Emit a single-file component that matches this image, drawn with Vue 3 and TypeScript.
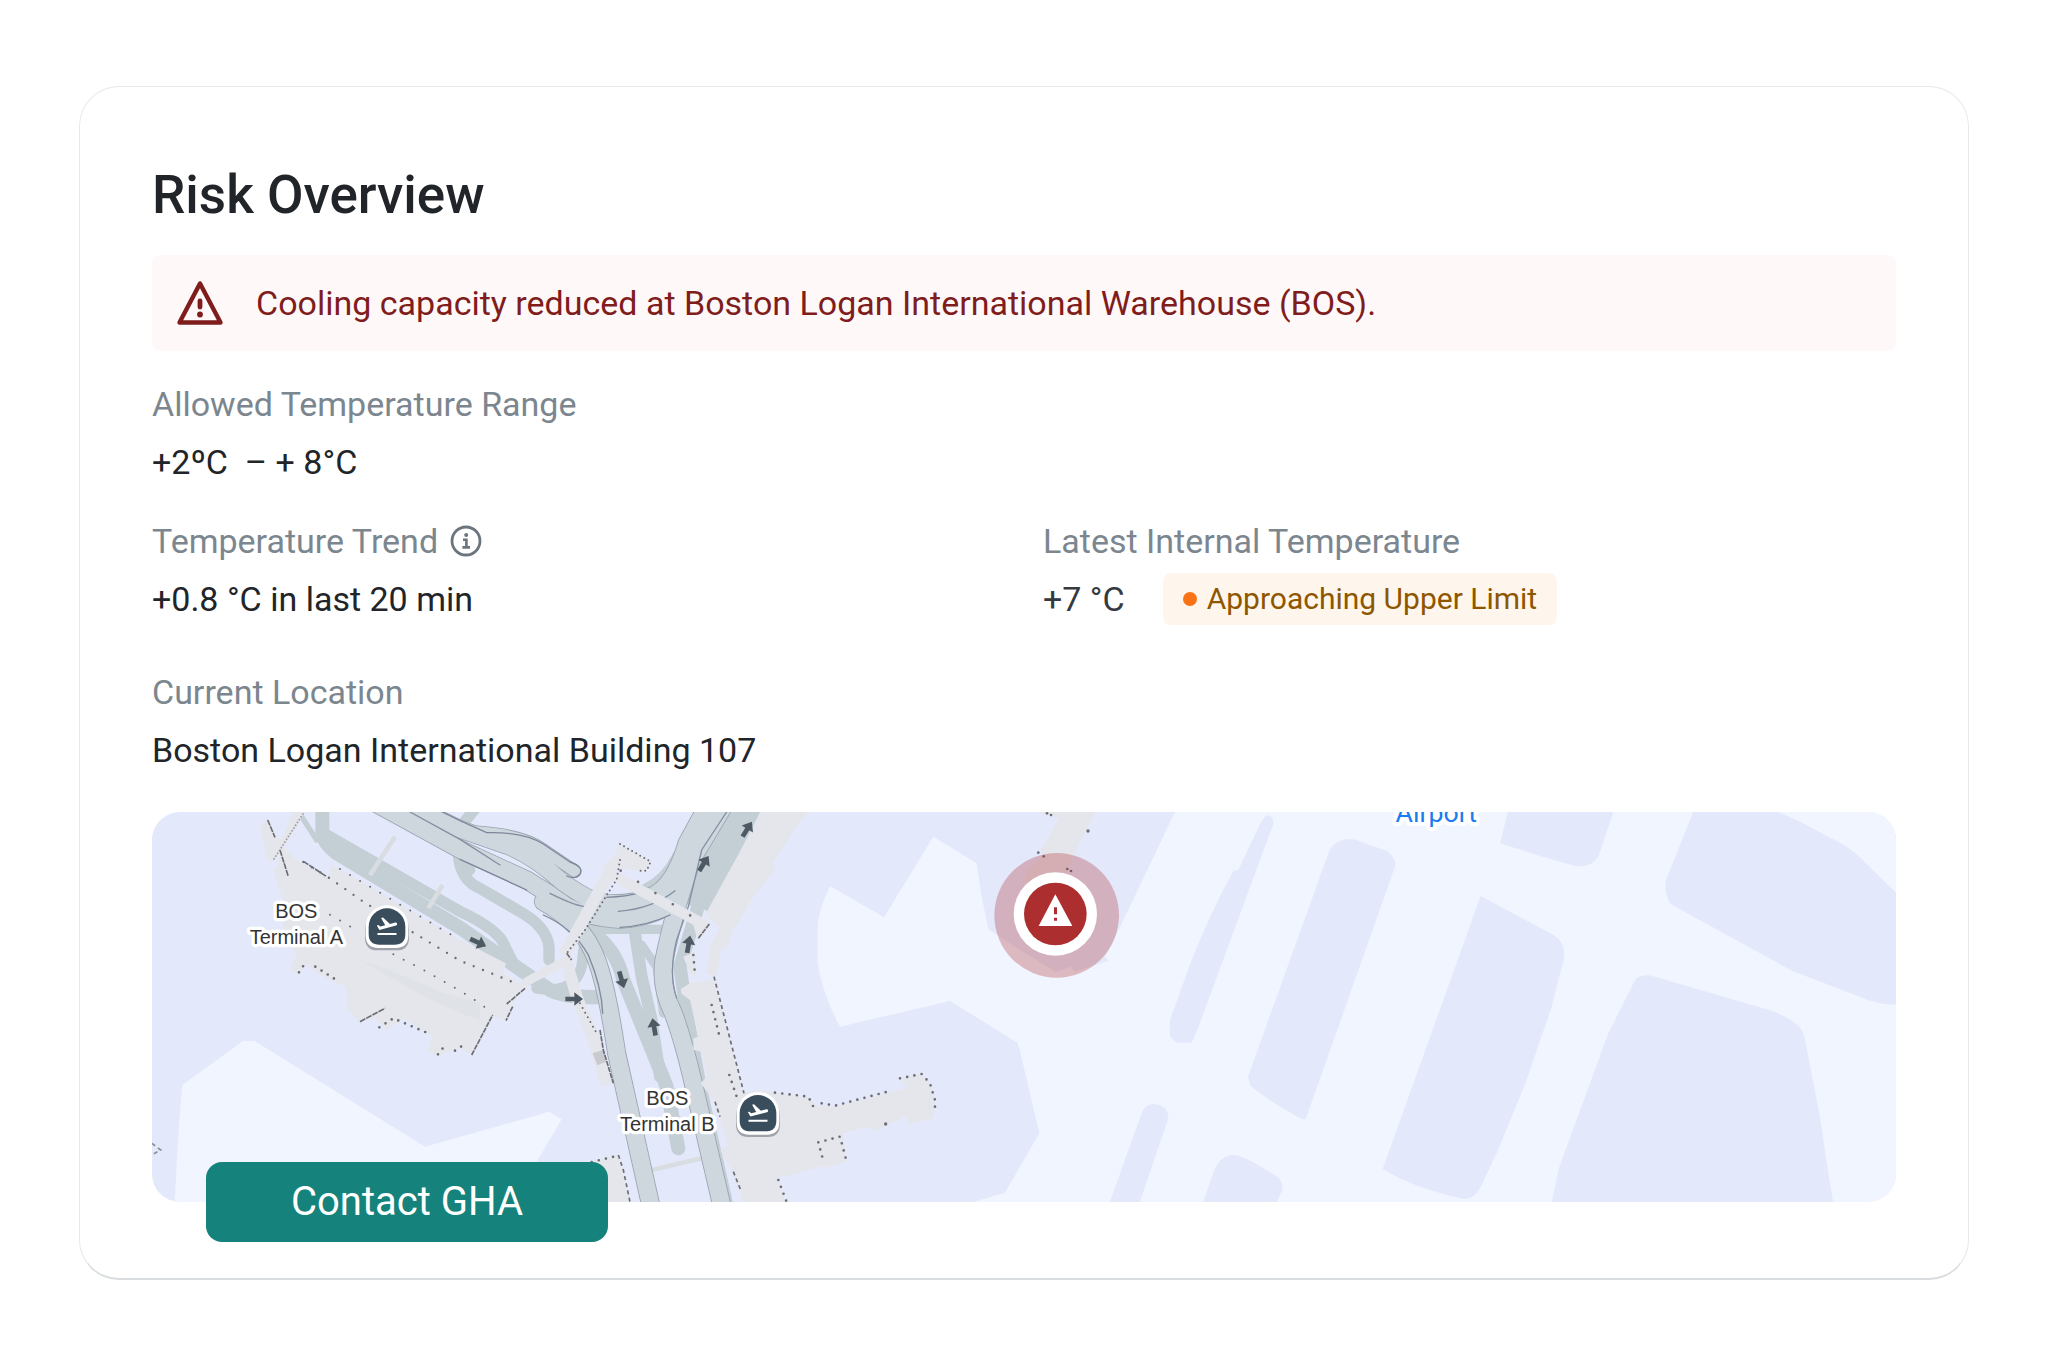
<script setup lang="ts">
interface Arrow {
  x: number
  y: number
  angle: number
}

interface TerminalPin {
  name: string
  textX: number
  textY: number
  pinX: number
  pinY: number
}

const arrows: Arrow[] = [
  { x: 55, y: 428, angle: 25 },
  { x: 343, y: 597, angle: 0 },
  { x: 485, y: 540, angle: 74 },
  { x: 582, y: 680, angle: -100 },
  { x: 686, y: 432, angle: -80 },
  { x: 732, y: 190, angle: -58 },
  { x: 862, y: 87, angle: -58 },
]

const terminals: TerminalPin[] = [
  { name: 'Terminal A', textX: 433, textY: 317, pinX: 705, pinY: 344 },
  { name: 'Terminal B', textX: 1546, textY: 878, pinX: 1818, pinY: 904 },
]

const elevatedRoads: { d: string; width: number }[] = [
  { d: 'M50 96Q190 105 250 150L345 214', width: 34 },
  { d: 'M-180 0L0 88L150 140Q230 175 300 240Q360 285 400 300Q480 325 570 290Q640 265 680 130L740 20', width: 50 },
  { d: 'M-270 0L0 148L200 240Q260 275 320 320Q380 350 480 358Q600 350 655 290', width: 52 },
  { d: 'M250 305Q370 370 410 480Q440 560 470 760L572 1215', width: 52 },
  { d: 'M790 20L700 170Q650 300 612 480Q600 560 640 640Q670 720 700 850L785 1215', width: 52 },
]
</script>

<template>
  <main class="page">
    <section class="card" aria-labelledby="risk-title">
      <h1 id="risk-title" class="title">Risk Overview</h1>

      <div class="alert" role="alert">
        <svg class="alert-icon" viewBox="0 0 48 46" aria-hidden="true">
          <path d="M24 3.5L3.5 42.5H44.5Z" fill="none" stroke="currentColor" stroke-width="4.4" stroke-linejoin="round" />
          <path d="M24 21V27" stroke="currentColor" stroke-width="4.8" stroke-linecap="round" />
          <circle cx="24" cy="34.5" r="2.9" fill="currentColor" />
        </svg>
        <span>Cooling capacity reduced at Boston Logan International Warehouse (BOS).</span>
      </div>

      <dl class="fields">
        <div class="field wide">
          <dt>Allowed Temperature Range</dt>
          <dd>+2ºC&nbsp; – + 8°C</dd>
        </div>
        <div class="field">
          <dt>
            Temperature Trend
            <svg class="info" viewBox="0 0 32 32" role="img" aria-label="More information">
              <circle cx="16" cy="16" r="14" fill="none" stroke="currentColor" stroke-width="2.8" />
              <circle cx="16.2" cy="10" r="2" fill="currentColor" />
              <path d="M13 14.8H16.4V22.2M12.4 22.4H20" fill="none" stroke="currentColor" stroke-width="2.6" />
            </svg>
          </dt>
          <dd>+0.8 °C in last 20 min</dd>
        </div>
        <div class="field">
          <dt>Latest Internal Temperature</dt>
          <dd class="reading">
            +7 °C
            <span class="badge"><i class="dot"></i>Approaching Upper Limit</span>
          </dd>
        </div>
        <div class="field wide location">
          <dt>Current Location</dt>
          <dd>Boston Logan International Building 107</dd>
        </div>
      </dl>

      <svg class="map" viewBox="0 0 5232 1170" role="img" aria-label="Map of the current location">
        <rect width="5232" height="1170" fill="#e4e8fb" />

        <!-- Taxiways -->
        <path
          transform="translate(-36 -36)" fill="#f1f5ff"
          d="M104 1210L115 1000L127 855L310 722L345 724L855 1040L1020 994L1228 935L1265 958L1190 1086L1120 1210Z"
        />
        <path
          transform="translate(1884 -36)" fill="#f1f5ff"
          d="M1185 36L1020 382L975 470L985 482L885 515L872 500L828 516L740 462L625 388L605 290L590 190L460 110L312 352L150 258Q113 340 113 380V490Q130 590 180 680L510 603L712 728L718 745L778 1000L675 1178L565 1210H3360V30Z"
        />
        <g fill="#e4e8fb">
          <g transform="translate(3024 -36)">
            <path d="M318 46Q342 46 340 72L112 690L95 728H50L30 710V660L95 480Q150 340 220 212L235 210L300 72Z" />
            <path d="M505 160Q520 118 570 117Q590 117 610 128L680 152Q710 175 705 200L437 958L425 957Q320 900 270 855L264 830Z" />
            <path d="M962 288L1180 405Q1215 425 1213 470L1175 620L1100 840L1010 1060L960 1165Q940 1200 910 1197Q750 1160 668 1107Z" />
            <path d="M165 1105Q185 1065 225 1065Q260 1070 355 1133Q372 1150 367 1170L348 1210H128Z" />
            <path d="M1045 30L1020 130L1140 168L1245 198Q1290 205 1315 170L1362 30Z" />
          </g>
          <path transform="translate(1884 -36)" d="M1085 940Q1095 912 1120 912Q1165 915 1165 955L1078 1210H988Z" />
          <g transform="translate(4164 -36)">
            <path d="M462 30L378 240Q370 275 392 312L755 512L960 590Q1020 617 1080 613V290L965 178Q940 150 900 128L770 60L700 30Z" />
            <path d="M285 540Q300 522 335 527L680 628Q780 660 792 705L840 950L862 1100L880 1210H34L58 1100L205 700Z" />
          </g>
        </g>

        <g transform="translate(924 -36)">
          <!-- Ground-level roads -->
          <g fill="none" stroke="#c3ced5" stroke-linecap="round" stroke-linejoin="round">
            <path d="M10 70L50 20" stroke-width="34" />
            <path d="M-475 50L-430 120" stroke-width="16" />
            <path d="M-400 105L0 334Q120 390 135 440L165 500" stroke-width="34" />
            <path d="M-413 20V100Q-410 130 -370 160L0 383L190 515L270 570Q310 592 420 592" stroke-width="42" />
            <path d="M-5 160Q0 240 60 265L180 335Q260 380 267 440V480" stroke-width="34" />
            <path d="M30 210L10 170M230 565Q340 585 365 500L372 440" stroke-width="32" />
            <path d="M385 388H620" stroke-width="28" />
            <path d="M400 400Q470 450 490 540L580 760L620 860L655 1045" stroke-width="42" />
            <path d="M525 400L545 530L575 660L600 830" stroke-width="36" />
            <path d="M545 435L590 500L610 640" stroke-width="26" />
            <path d="M750 20L650 180Q620 240 560 270" stroke-width="40" />
            <path d="M820 30L720 300L660 500L680 640L720 860L800 1215" stroke-width="40" />
            <path d="M870 10L715 320" stroke-width="78" stroke-linecap="butt" />
            <path d="M800 40L700 300" stroke-width="40" />
          </g>
          <g fill="none" stroke="#d9dde1" stroke-width="14">
            <path d="M-195 110L-270 225M-52 255L-95 325M575 1110L725 1075" />
          </g>

          <!-- Elevated roads: casing below, surface above -->
          <g fill="none" stroke-linecap="round">
            <path v-for="road in elevatedRoads" :key="'c' + road.d" :d="road.d" :stroke-width="road.width + 5" stroke="#98a3b0" />
            <path v-for="road in elevatedRoads" :key="road.d" :d="road.d" :stroke-width="road.width" stroke="#ced7de" />
            <path d="M-150 36L0 118L120 195M270 280Q340 315 375 320M475 334Q580 325 645 272M800 36L725 150L685 320L650 420Q625 520 650 595" stroke="#858fa2" stroke-width="4" />
            <path d="M-150 -12L0 62L80 98Q190 95 250 132L330 186Q372 200 360 222Q345 240 320 228M0 178L200 270M250 345Q340 385 385 465Q425 560 428 640M440 292Q500 290 540 278M480 382Q560 378 630 345" stroke="#7d889b" stroke-width="4" />
          </g>

          <!-- Terminal A -->
          <g fill="#e5e6eb">
            <path d="M-560 210L-490 180L-395 232L-385 195L-320 230L0 420L138 490L130 518L180 553L140 605L155 620L135 660L100 650L35 765L0 745L-70 768L-98 752L-80 708L-130 680L-170 655L-220 690L-255 655L-305 665L-340 620V560L-410 530L-460 495L-485 523L-510 510L-490 460L-530 420V300Z" />
            <path d="M-500 36H-465L-520 130L-560 185L-582 178L-590 125L-600 75L-580 58L-555 110L-535 118Z" />
            <path d="M-530 140L-480 190L-530 240L-550 190Z" />
          </g>
          <path d="M-300 480Q-180 520 -60 575L60 610V660Q-60 620 -160 560Z" fill="#dfe2e6" />

          <!-- Walkways -->
          <g fill="none" stroke="#e5e6eb" stroke-linejoin="round">
            <path d="M455 205L312 465" stroke-width="36" />
            <path d="M450 222L735 375" stroke-width="32" />
            <path d="M330 475L200 545L120 630" stroke-width="26" />
            <path d="M315 470L350 590L400 715L440 855" stroke-width="36" />
          </g>
          <g fill="#e5e6eb">
            <path d="M480 130L572 185L560 215L480 205L430 230V200L465 165Z" />
            <path d="M740 355L750 375L712 420L700 375Z" />
            <path d="M670 470L705 455L710 530L690 520Z" />
            <path d="M905 36H1045L1000 90L940 190L945 210L880 290L820 390L800 445L785 445L770 530L740 520L750 440L780 380L735 345Z" />
            <path d="M395 1086L475 1065L510 1206H440Z" />
            <!-- Terminal B -->
            <path d="M662 567L690 550L765 538L850 880L900 870L960 880L1045 895L1070 915L1120 920L1340 865L1320 835L1385 822L1415 860L1425 900L1420 955L1350 972L1340 948L1250 990L1220 980L1150 1000L1160 1085L1100 1103L1090 1098L955 1135L978 1206H850L810 1100L780 1050L805 1035L760 900L722 850L740 830L725 755L700 750V715L715 710L690 600L665 582Z" />
          </g>
          <path d="M398 760L430 750L438 785L412 796Z" fill="#c9cacf" />

          <!-- Building outlines -->
          <g fill="none" stroke="#6c6d72" stroke-width="8" stroke-linecap="round" stroke-dasharray="0 22">
            <path d="M-470 186L-395 232L-290 305L-170 380L0 482L175 553" stroke-width="7" stroke-dasharray="0 30" />
            <path d="M-360 207L0 420M-390 344L-325 382M-200 463L-100 515L30 590L80 625" stroke-width="6" stroke-dasharray="0 35" />
            <path d="M-483 517L-465 490M-434 500L-363 545M-242 682L-200 655L-100 698M-66 763L-40 730M-15 752L10 735" />
            <path d="M480 132L572 185L560 212L530 212M480 180L470 238L375 390L320 460" stroke-width="6" stroke-dasharray="0 14" />
            <path d="M482 212L735 375" stroke-dasharray="0 62" />
            <path d="M360 610L410 700" stroke-width="6" stroke-dasharray="0 16" />
            <path d="M700 465L705 525M945 878L1045 890L1065 930M1085 910L1125 917L1290 873M1320 835L1385 822L1410 850L1425 900V930" />
            <path d="M755 615L780 715M808 825L830 890M1075 1027L1140 1010L1160 1085M1075 1027L1092 1090M395 1086L470 1068" />
            <path d="M955 1140L980 1206" />
          </g>
          <g fill="none" stroke="#6c6d72" stroke-width="5" stroke-dasharray="12 10">
            <path d="M-577 60L-555 112M-540 150L-515 230M-470 184L-400 230M-300 665L-225 625" stroke-dasharray="18 3" />
            <path d="M-470 40L-560 180" stroke="#9b9da3" stroke-dasharray="5 5" />
            <path d="M762 530L852 880M765 905L780 950M475 1065L490 1110L510 1206M820 1115L842 1170" />
            <path d="M35 765L98 645M195 565L140 612M158 620L138 662M420 690L430 750L460 850M748 372L715 415M320 460L335 480" stroke-dasharray="16 3" />
            <path d="M-924 1030L-898 1050L-920 1062" stroke="#8c8e94" />
          </g>

          <!-- Traffic direction -->
          <path
            v-for="arrow in arrows" :key="arrow.x"
            :transform="`translate(${arrow.x} ${arrow.y}) rotate(${arrow.angle})`"
            d="M-27 -7H0V-20L26 0L0 20V7H-27Z" fill="#4e5a63"
          />
        </g>

        <!-- Building beneath the warning marker -->
        <g transform="translate(1884 -36)">
          <path d="M770 36H945L850 230L730 250L745 210L790 165L780 155L835 58Z" fill="#e5e6eb" />
          <path d="M760 30L835 58L780 155L740 130Z" fill="#e4e8fb" />
          <g fill="#6c6d72">
            <circle cx="775" cy="158" r="4" />
            <circle cx="791" cy="169" r="4" />
            <circle cx="801" cy="40" r="4" />
            <circle cx="813" cy="45" r="4" />
            <circle cx="924" cy="93" r="5" />
            <circle cx="862" cy="207" r="4" />
            <circle cx="873" cy="213" r="4" />
            <circle cx="317" cy="972" r="5" />
          </g>
        </g>

        <!-- Place names and terminal pins -->
        <g v-for="terminal in terminals" :key="terminal.name">
          <text class="place" :x="terminal.textX" :y="terminal.textY">BOS</text>
          <text class="place" :x="terminal.textX" :y="terminal.textY + 80">{{ terminal.name }}</text>
          <g :transform="`translate(${terminal.pinX} ${terminal.pinY})`">
            <path d="M-66 4A66 66 0 0 1 66 4V28Q66 66 28 66H-28Q-66 66 -66 28Z" fill="#9fa2a8" transform="translate(0 5)" />
            <path d="M-64 0A64 64 0 0 1 64 0V26Q64 64 26 64H-26Q-64 64 -64 26Z" fill="#fff" />
            <path d="M-55 0A55 55 0 0 1 55 0V22Q55 54 22 54H-22Q-55 54 -55 22Z" fill="#394d5d" />
            <path
              transform="translate(-36 -38) scale(3)" fill="#fff"
              d="M2.5 19h19v2h-19v-2zm19.57-9.36c-.21-.8-1.04-1.28-1.84-1.06L14.92 10l-6.9-6.43-1.93.51 4.14 7.17-4.97 1.33-1.97-1.54-1.45.39 2.59 4.49L21 11.49c.81-.23 1.28-1.05 1.07-1.85z"
            />
          </g>
        </g>
        <text class="area" x="3853" y="30">Airport</text>

        <!-- Warning marker -->
        <g transform="translate(1884 -36)">
          <circle cx="830" cy="346" r="187" fill="#ac2e2e" fill-opacity="0.3" />
          <circle cx="826" cy="342" r="125" fill="#fff" />
          <circle cx="826" cy="342" r="94" fill="#ac2e2e" />
          <path d="M776 378H877L826 283Z" fill="#fff" />
          <path d="M822 322H831V343H822ZM822 353H831V362H822Z" fill="#ac2e2e" />
        </g>
      </svg>

      <button class="contact" type="button">Contact GHA</button>
    </section>
  </main>
</template>

<style>
body {
  margin: 0;
  background: #fff;
}
</style>

<style scoped>
.page {
  padding: 86px 79px;
  font-family: Roboto, "Liberation Sans", sans-serif;
  color: #212529;
}

.card {
  display: flex;
  flex-direction: column;
  padding: 78px 72px 36px;
  border: 1px solid #e6eaed;
  border-bottom: 2px solid #dadddf;
  border-radius: 40px;
  background: #fff;
}

.title {
  margin: 0 0 30px;
  font-size: 53px;
  line-height: 60px;
  font-weight: 500;
}

.alert {
  display: flex;
  align-items: center;
  gap: 32px;
  padding: 28px 24px;
  border-radius: 8px;
  background: #fff8f9;
  color: #7f1d1d;
  font-size: 34px;
  line-height: 40px;
}

.alert-icon {
  flex: none;
  width: 48px;
  height: 46px;
  margin: -3px 0;
}

.fields {
  display: grid;
  grid-template-columns: 1fr 1fr;
  gap: 33px 38px;
  margin: 33px 0 36px;
  font-size: 34px;
}

.wide {
  grid-column: 1 / -1;
}

.location {
  margin-top: 14px;
}

dt {
  display: flex;
  align-items: center;
  gap: 12px;
  margin-bottom: 12px;
  line-height: 40px;
  color: #7c868f;
}

dd {
  margin: 0;
  line-height: 52px;
}

.info {
  width: 32px;
  height: 32px;
  color: #6c757d;
}

.reading {
  display: flex;
  align-items: center;
  gap: 38px;
  color: #343a40;
}

.badge {
  display: flex;
  align-items: center;
  gap: 10px;
  padding: 0 20px;
  border-radius: 8px;
  background: #fef6ec;
  color: #8f5600;
  font-size: 30px;
}

.dot {
  width: 14px;
  height: 14px;
  border-radius: 50%;
  background: #f97316;
}

.map {
  display: block;
  width: 100%;
  height: auto;
  border-radius: 28px;
}

.place,
.area {
  stroke: #fff;
  stroke-linejoin: round;
  paint-order: stroke;
  text-anchor: middle;
}

.place {
  font-family: "Liberation Sans", Arial, sans-serif;
  font-size: 60px;
  fill: #333;
  stroke-width: 20px;
}

.area {
  font-size: 80px;
  fill: #1a7cf0;
  stroke-width: 24px;
}

.contact {
  position: relative;
  align-self: flex-start;
  width: 402px;
  height: 80px;
  margin: -40px 0 0 54px;
  padding: 0;
  border: 0;
  border-radius: 16px;
  background: #15827b;
  color: #fff;
  font: 400 40px/80px Roboto, "Liberation Sans", sans-serif;
  cursor: pointer;
}
</style>
